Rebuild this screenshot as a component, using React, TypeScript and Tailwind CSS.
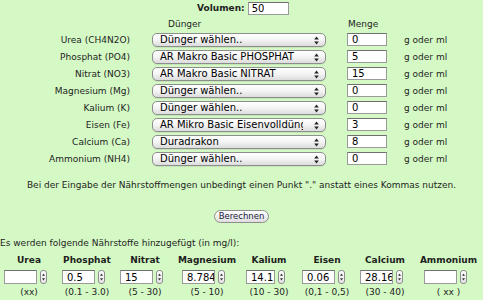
import React from "react";

type NutrientRow = {
  label: string;
  fertilizer: string;
  amount: string;
};

type ResultColumn = {
  name: string;
  value: string;
  range: string;
  width: string;
  inputWidth: string;
};

const rows: NutrientRow[] = [
  { label: "Urea (CH4N2O)", fertilizer: "Dünger wählen..", amount: "0" },
  { label: "Phosphat (PO4)", fertilizer: "AR Makro Basic PHOSPHAT", amount: "5" },
  { label: "Nitrat (NO3)", fertilizer: "AR Makro Basic NITRAT", amount: "15" },
  { label: "Magnesium (Mg)", fertilizer: "Dünger wählen..", amount: "0" },
  { label: "Kalium (K)", fertilizer: "Dünger wählen..", amount: "0" },
  { label: "Eisen (Fe)", fertilizer: "AR Mikro Basic Eisenvolldünger", amount: "3" },
  { label: "Calcium (Ca)", fertilizer: "Duradrakon", amount: "8" },
  { label: "Ammonium (NH4)", fertilizer: "Dünger wählen..", amount: "0" },
];

const results: ResultColumn[] = [
  { name: "Urea", value: "", range: "(xx)", width: "w-[58px]", inputWidth: "w-[33px]" },
  { name: "Phosphat", value: "0.5", range: "(0.1 - 3.0)", width: "w-[58px]", inputWidth: "w-[33px]" },
  { name: "Nitrat", value: "15", range: "(5 - 30)", width: "w-[58px]", inputWidth: "w-[33px]" },
  { name: "Magnesium", value: "8.784", range: "(5 - 10)", width: "w-[66px]", inputWidth: "w-[33px]" },
  { name: "Kalium", value: "14.15", range: "(10 - 30)", width: "w-[58px]", inputWidth: "w-[29px]" },
  { name: "Eisen", value: "0.06", range: "(0,1 - 0,5)", width: "w-[58px]", inputWidth: "w-[33px]" },
  { name: "Calcium", value: "28.16", range: "(30 - 40)", width: "w-[58px]", inputWidth: "w-[33px]" },
  { name: "Ammonium", value: "", range: "( xx )", width: "w-[69px]", inputWidth: "w-[33px]" },
];

function UpDownArrows({ className }: { className?: string }) {
  return (
    <svg className={className} width="5" height="9" viewBox="0 0 5 9" aria-hidden="true">
      <path d="M2.5 0.5 L4.8 3.6 L0.2 3.6 Z" fill="#222" />
      <path d="M2.5 8.5 L4.8 5.4 L0.2 5.4 Z" fill="#222" />
    </svg>
  );
}

function FakeSelect({ value }: { value: string }) {
  return (
    <div className="relative ml-[22px] flex h-[14px] w-[174px] items-center overflow-hidden rounded-[5px] border border-[#8d8d8d] bg-gradient-to-b from-white via-[#f4f4f4] to-[#dcdcdc] shadow-[0_1px_0_rgba(0,0,0,0.08)]">
      <span className="block w-[150px] overflow-hidden whitespace-nowrap pl-[7px] text-[10px] leading-[12px] text-black">{value}</span>
      <UpDownArrows className="absolute right-[6px] top-[2px]" />
    </div>
  );
}

function Stepper() {
  return (
    <div className="flex h-[14px] w-[7px] items-center justify-center rounded-[3px] border border-[#8d8d8d] bg-gradient-to-b from-white to-[#e4e4e4]">
      <svg width="3" height="8" viewBox="0 0 3 8" aria-hidden="true">
        <path d="M1.5 0.5 L3 2.8 L0 2.8 Z" fill="#333" />
        <path d="M1.5 7.5 L3 5.2 L0 5.2 Z" fill="#333" />
      </svg>
    </div>
  );
}

export default function App() {
  return (
    <div className="h-[300px] w-[483px] overflow-hidden bg-[#d5f9c5] pt-[2px] text-[9px] text-[#1e1e1e]" style={{ fontFamily: '"DejaVu Sans", Verdana, sans-serif' }}>
      <div className="flex h-[13px] items-center pl-[197px]">
        <span className="font-bold leading-[13px]">Volumen:</span>
        <input
          readOnly
          value="50"
          className="ml-[3px] h-[13px] w-[41px] border border-[#9a9a9a] border-t-[#6f6f6f] bg-white pl-[3px] text-[10px] leading-[11px] text-black outline-none"
        />
      </div>

      <div className="flex h-[16px] items-center pt-[1px]">
        <span className="ml-[168px] w-[180px] leading-[12px]">Dünger</span>
        <span className="leading-[12px]">Menge</span>
      </div>

      {rows.map((row) => (
        <div key={row.label} className="flex h-[17px] items-center">
          <span className="w-[130px] text-right leading-[12px]">{row.label}</span>
          <FakeSelect value={row.fertilizer} />
          <input
            readOnly
            value={row.amount}
            className="ml-[21px] h-[13px] w-[40px] border border-[#9a9a9a] border-t-[#6f6f6f] bg-white pl-[4px] text-[10px] leading-[11px] text-black outline-none"
          />
          <span className="ml-[17px] leading-[12px]">g oder ml</span>
        </div>
      ))}

      <p className="mt-[13px] text-center leading-[11px]">Bei der Eingabe der Nährstoffmengen unbedingt einen Punkt "." anstatt eines Kommas nutzen.</p>

      <div className="mt-[19px] flex justify-center">
        <button className="flex h-[13px] w-[55px] items-center justify-center rounded-full border border-[#8d8d8d] bg-gradient-to-b from-white to-[#dedede] text-[8.5px] leading-[11px] text-[#1a1a3a]">
          Berechnen
        </button>
      </div>

      <p className="mt-[14px] leading-[12px]">Es werden folgende Nährstoffe hinzugefügt (in mg/l):</p>

      <div className="mt-[6px] flex">
        {results.map((col) => (
          <div key={col.name} className={`flex flex-col items-center ${col.width}`}>
            <span className="font-bold leading-[11px]">{col.name}</span>
            <div className="mr-[7px] mt-[4px] flex items-center gap-[3px]">
              <input
                readOnly
                value={col.value}
                className={`h-[14px] ${col.inputWidth} border border-[#9a9a9a] border-t-[#6f6f6f] bg-white pl-[4px] text-[10px] leading-[12px] text-black outline-none`}
              />
              <Stepper />
            </div>
            <span className="mt-[2px] whitespace-nowrap leading-[12px]">{col.range}</span>
          </div>
        ))}
      </div>
    </div>
  );
}
